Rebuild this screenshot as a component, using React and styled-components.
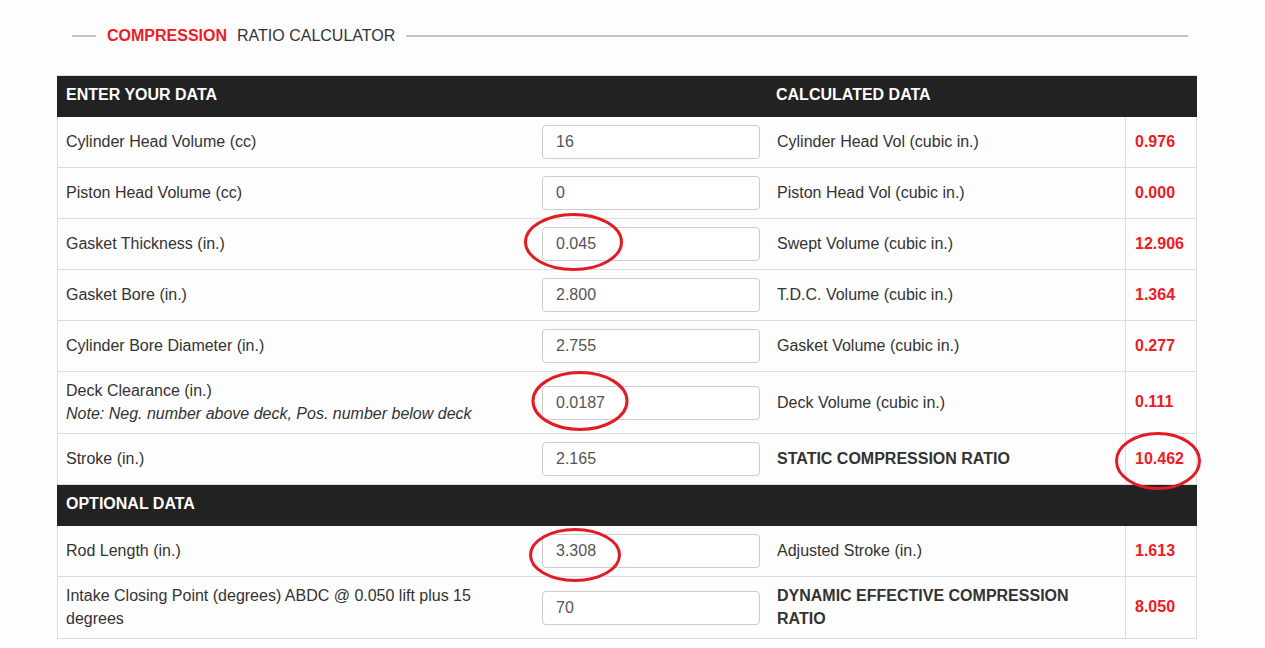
import React from 'react';
import styled, { createGlobalStyle } from 'styled-components';

const GlobalStyle = createGlobalStyle`
  body {
    margin: 0;
    background: #fdfdfd;
    font-family: "Liberation Sans", Arial, sans-serif;
    color: #333;
  }
`;

const Page = styled.div`
  position: relative;
  width: 1265px;
  min-height: 648px;
  padding: 25px 0 0 57px;
  box-sizing: border-box;
`;

const Wrapper = styled.div`
  width: 1140px;
`;

const Title = styled.div`
  display: flex;
  align-items: center;
  gap: 11px;
  height: 22px;
  margin: 0 9px 28px 15px;
  font-size: 16px;
  white-space: nowrap;

  &::before,
  &::after {
    content: '';
    height: 2px;
    background: #c4c4c4;
  }
  &::before {
    width: 24px;
  }
  &::after {
    flex: 1;
  }
`;

const Red = styled.span`
  color: #ed1c24;
  font-weight: bold;
  margin-right: 10px;
`;

const Table = styled.div`
  border: 1px solid #ddd;
  border-bottom: none;
`;

const Row = styled.div`
  display: grid;
  grid-template-columns: 472px 236px 359px 71px;
  min-height: ${(p) => p.$h || 50}px;
  border-bottom: 1px solid #ddd;
  background: #fdfdfd;
`;

const HeadRow = styled.div`
  display: grid;
  grid-template-columns: 708px 430px;
  height: 41px;
  box-sizing: border-box;
  padding-bottom: 3px;
  align-items: center;
  background: #222;
  color: #fff;
  font-weight: bold;
  font-size: 16px;
  margin: 0 -1px;
`;

const HeadCell = styled.div`
  padding-left: ${(p) => p.$pl || 9}px;
`;

const Label = styled.div`
  display: flex;
  flex-direction: column;
  justify-content: center;
  padding: 0 8px 1px;
  font-size: 16px;
  line-height: 23px;
`;

const Note = styled.span`
  font-style: italic;
`;

const InputCell = styled.div`
  display: flex;
  align-items: center;
  padding-left: 12px;
`;

const Input = styled.input`
  width: 218px;
  height: 34px;
  box-sizing: border-box;
  border: 1px solid #ccc;
  border-radius: 4px;
  padding: 0 13px;
  font-family: "Liberation Sans", Arial, sans-serif;
  font-size: 16px;
  color: #555;
  background: #fff;
  outline: none;
`;

const CalcLabel = styled.div`
  display: flex;
  align-items: center;
  padding: 0 8px 1px 11px;
  font-size: 16px;
  font-weight: ${(p) => (p.$strong ? 'bold' : 'normal')};
  line-height: 23px;
`;

const Value = styled.div`
  display: flex;
  align-items: center;
  border-left: 1px solid #ddd;
  padding: 0 0 1px 9px;
  color: #ed1c24;
  font-weight: bold;
  font-size: 16px;
`;

const Marks = styled.svg`
  position: absolute;
  left: 0;
  top: 0;
  pointer-events: none;
`;

const mainRows = [
  { label: 'Cylinder Head Volume (cc)', input: '16', calc: 'Cylinder Head Vol (cubic in.)', value: '0.976' },
  { label: 'Piston Head Volume (cc)', input: '0', calc: 'Piston Head Vol (cubic in.)', value: '0.000' },
  { label: 'Gasket Thickness (in.)', input: '0.045', calc: 'Swept Volume (cubic in.)', value: '12.906' },
  { label: 'Gasket Bore (in.)', input: '2.800', calc: 'T.D.C. Volume (cubic in.)', value: '1.364' },
  { label: 'Cylinder Bore Diameter (in.)', input: '2.755', calc: 'Gasket Volume (cubic in.)', value: '0.277' },
  {
    label: 'Deck Clearance (in.)',
    note: 'Note: Neg. number above deck, Pos. number below deck',
    input: '0.0187',
    calc: 'Deck Volume (cubic in.)',
    value: '0.111',
    h: 61,
  },
  { label: 'Stroke (in.)', input: '2.165', calc: 'STATIC COMPRESSION RATIO', value: '10.462', strong: true },
];

const optionalRows = [
  { label: 'Rod Length (in.)', input: '3.308', calc: 'Adjusted Stroke (in.)', value: '1.613' },
  {
    label: 'Intake Closing Point (degrees) ABDC @ 0.050 lift plus 15 degrees',
    input: '70',
    calc: 'DYNAMIC EFFECTIVE COMPRESSION RATIO',
    value: '8.050',
    strong: true,
    h: 61,
  },
];

const circles = [
  { cx: 573.5, cy: 242, rx: 48, ry: 27.5 },
  { cx: 580, cy: 401, rx: 47, ry: 28.5 },
  { cx: 1158, cy: 461, rx: 41.5, ry: 27.5 },
  { cx: 575, cy: 555, rx: 44.5, ry: 25.5 },
];

function DataRow({ row }) {
  return (
    <Row $h={row.h}>
      <Label>
        <span>{row.label}</span>
        {row.note && <Note>{row.note}</Note>}
      </Label>
      <InputCell>
        <Input defaultValue={row.input} />
      </InputCell>
      <CalcLabel $strong={row.strong}>{row.calc}</CalcLabel>
      <Value>{row.value}</Value>
    </Row>
  );
}

export default function App() {
  return (
    <Page>
      <GlobalStyle />
      <Wrapper>
        <Title>
          <span>
            <Red>COMPRESSION</Red>
            RATIO CALCULATOR
          </span>
        </Title>
        <Table>
          <HeadRow>
            <HeadCell>ENTER YOUR DATA</HeadCell>
            <HeadCell $pl={11}>CALCULATED DATA</HeadCell>
          </HeadRow>
          {mainRows.map((r) => (
            <DataRow key={r.label} row={r} />
          ))}
          <HeadRow>
            <HeadCell>OPTIONAL DATA</HeadCell>
          </HeadRow>
          {optionalRows.map((r) => (
            <DataRow key={r.label} row={r} />
          ))}
        </Table>
      </Wrapper>
      <Marks width="1265" height="648">
        {circles.map((c) => (
          <ellipse
            key={`${c.cx}-${c.cy}`}
            cx={c.cx}
            cy={c.cy}
            rx={c.rx}
            ry={c.ry}
            fill="none"
            stroke="#e31b23"
            strokeWidth="3"
          />
        ))}
      </Marks>
    </Page>
  );
}
